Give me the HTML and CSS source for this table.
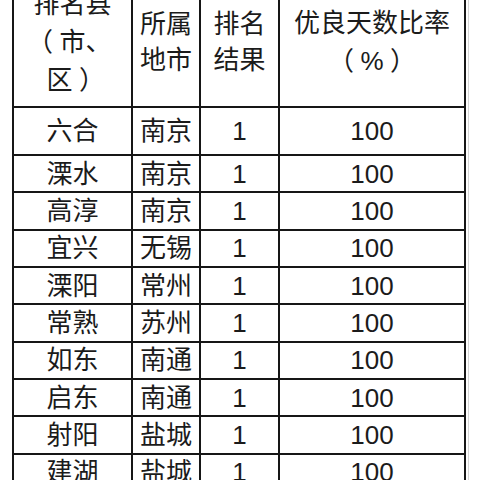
FILE: index.html
```html
<!DOCTYPE html>
<html lang="zh">
<head>
<meta charset="utf-8">
<title>排名</title>
<link rel="stylesheet" href="styles.css">
</head>
<body>
<div class="frame">
  <div class="sheet">
    <div class="cell head"><span>排名县</span><span><i class="fw">（</i>市、</span><span>区<i class="fw">）</i></span></div>
    <div class="cell head"><span>所属</span><span>地市</span></div>
    <div class="cell head"><span>排名</span><span>结果</span></div>
    <div class="cell head"><span>优良天数比率</span><span><i class="fw">（</i>%<i class="fw">）</i></span></div>

    <div class="cell">六合</div><div class="cell">南京</div><div class="cell">1</div><div class="cell">100</div>
    <div class="cell">溧水</div><div class="cell">南京</div><div class="cell">1</div><div class="cell">100</div>
    <div class="cell">高淳</div><div class="cell">南京</div><div class="cell">1</div><div class="cell">100</div>
    <div class="cell">宜兴</div><div class="cell">无锡</div><div class="cell">1</div><div class="cell">100</div>
    <div class="cell">溧阳</div><div class="cell">常州</div><div class="cell">1</div><div class="cell">100</div>
    <div class="cell">常熟</div><div class="cell">苏州</div><div class="cell">1</div><div class="cell">100</div>
    <div class="cell">如东</div><div class="cell">南通</div><div class="cell">1</div><div class="cell">100</div>
    <div class="cell">启东</div><div class="cell">南通</div><div class="cell">1</div><div class="cell">100</div>
    <div class="cell">射阳</div><div class="cell">盐城</div><div class="cell">1</div><div class="cell">100</div>
    <div class="cell">建湖</div><div class="cell">盐城</div><div class="cell">1</div><div class="cell">100</div>
  </div>
</div>
</body>
</html>
```

FILE: styles.css
```css
html, body {
  margin: 0;
  padding: 0;
  background: #ffffff;
  height: 480px;
  overflow: hidden;
}

body {
  font-family: "Liberation Sans", "Noto Sans CJK SC", sans-serif;
  color: #1b1b1b;
}

.frame {
  width: 454px;
  margin-left: 12px;
  margin-top: -24px;
  padding-right: 2px;
  border-right: 1px solid #d4d4d4;
}

.sheet {
  display: grid;
  grid-template-columns: 119px 68px 79px 186px;
  grid-template-rows: 130px 48px repeat(9, 37.35px);
  border-left: 2px solid #161616;
  border-top: 2px solid #161616;
}

.cell {
  box-sizing: border-box;
  border-right: 2px solid #161616;
  border-bottom: 2px solid #161616;
  display: flex;
  align-items: center;
  justify-content: center;
  font-size: 26px;
  line-height: 30px;
  white-space: nowrap;
}

.head {
  flex-direction: column;
  line-height: 36px;
}

.head span {
  display: block;
}

.fw {
  display: inline-block;
  width: 1em;
  text-align: center;
  font-style: normal;
  font-family: "Noto Sans CJK SC", sans-serif;
  font-feature-settings: "halt";
}
```
